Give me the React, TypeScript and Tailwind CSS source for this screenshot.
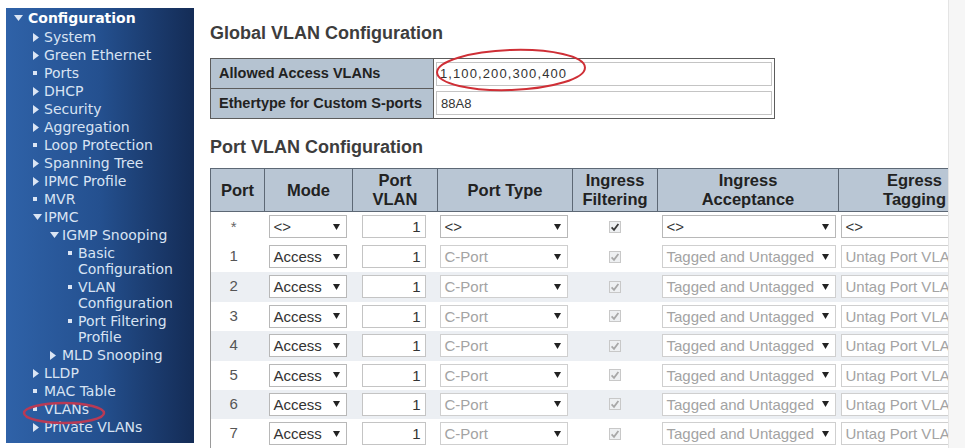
import React from "react";
import clsx from "clsx";

type Marker = "right" | "down" | "square";

const MarkerIcon = ({ kind }: { kind: Marker }) => {
  if (kind === "down")
    return (
      <svg width="9" height="6" viewBox="0 0 9 6">
        <polygon points="0,0 9,0 4.5,6" fill="#dbe5f4" />
      </svg>
    );
  if (kind === "right")
    return (
      <svg width="6" height="9" viewBox="0 0 6 9">
        <polygon points="0,0 6,4.5 0,9" fill="#dbe5f4" />
      </svg>
    );
  return <span className="block h-[4px] w-[4px] bg-[#dbe5f4]" />;
};

const NavItem = ({
  level,
  marker,
  children,
}: {
  level: number;
  marker: Marker;
  children: React.ReactNode;
}) => {
  const pad = ["pl-[27px]", "pl-[44px]", "pl-[62px]"][level - 1];
  const box = ["w-[11px]", "w-[12px]", "w-[10px]"][level - 1];
  return (
    <div className={clsx("mt-[2px] flex leading-[16px]", pad)}>
      <span className={clsx("flex h-[16px] shrink-0 items-center", box)}>
        <MarkerIcon kind={marker} />
      </span>
      <span>{children}</span>
    </div>
  );
};

const Arrow = () => (
  <svg width="7" height="6" viewBox="0 0 7 6" className="shrink-0">
    <polygon points="0,0 7,0 3.5,6" fill="#222" />
  </svg>
);

const Select = ({
  value,
  muted,
  className,
}: {
  value: string;
  muted?: boolean;
  className?: string;
}) => (
  <div
    className={clsx(
      "flex h-[23px] items-center justify-between overflow-hidden whitespace-nowrap border bg-white pl-[4px] pr-[6px] text-[15px] leading-[21px]",
      muted ? "border-[#cfcfcf] text-[#a3a3a3]" : "border-[#b8b8b8] text-[#333]",
      className,
    )}
  >
    <span>{value}</span>
    <Arrow />
  </div>
);

const Check = ({ active }: { active?: boolean }) => (
  <svg width="12" height="12" viewBox="0 0 12 12" className="mx-auto block">
    <rect x="0.5" y="0.5" width="11" height="11" fill="#eef0f2" stroke="#c8c8c8" />
    <path
      d="M2.6 6.4 L5 8.8 L9.4 3"
      fill="none"
      stroke={active ? "#3a3a3a" : "#a8a8a8"}
      strokeWidth="1.8"
    />
  </svg>
);

const ports = ["1", "2", "3", "4", "5", "6", "7"];

export default function App() {
  return (
    <div className="relative flex h-[448px] w-[965px] overflow-hidden bg-white font-['Liberation_Sans',Arial,sans-serif]">
      {/* left menu */}
      <aside className="ml-[6px] mt-[8px] h-[435px] w-[188px] shrink-0 overflow-hidden bg-gradient-to-r from-[#2f62a8] via-[#24508f] to-[#142c56] pt-[1px] font-['DejaVu_Sans',Verdana,sans-serif] text-[14px] text-[#d8e3f3]">
        <div className="flex items-center pl-[8px] text-[14px] font-bold leading-[18px] text-white">
          <span className="flex w-[14px] shrink-0 items-center">
            <MarkerIcon kind="down" />
          </span>
          Configuration
        </div>
        <div className="mt-[1px]">
          <NavItem level={1} marker="right">System</NavItem>
          <NavItem level={1} marker="right">Green Ethernet</NavItem>
          <NavItem level={1} marker="square">Ports</NavItem>
          <NavItem level={1} marker="right">DHCP</NavItem>
          <NavItem level={1} marker="right">Security</NavItem>
          <NavItem level={1} marker="right">Aggregation</NavItem>
          <NavItem level={1} marker="square">Loop Protection</NavItem>
          <NavItem level={1} marker="right">Spanning Tree</NavItem>
          <NavItem level={1} marker="right">IPMC Profile</NavItem>
          <NavItem level={1} marker="square">MVR</NavItem>
          <NavItem level={1} marker="down">IPMC</NavItem>
          <NavItem level={2} marker="down">IGMP Snooping</NavItem>
          <NavItem level={3} marker="square">Basic Configuration</NavItem>
          <NavItem level={3} marker="square">VLAN Configuration</NavItem>
          <NavItem level={3} marker="square">Port Filtering Profile</NavItem>
          <NavItem level={2} marker="right">MLD Snooping</NavItem>
          <NavItem level={1} marker="right">LLDP</NavItem>
          <NavItem level={1} marker="square">MAC Table</NavItem>
          <NavItem level={1} marker="square">VLANs</NavItem>
          <NavItem level={1} marker="right">Private VLANs</NavItem>
        </div>
      </aside>

      {/* content */}
      <main className="ml-[16px] w-[738px] shrink-0 overflow-hidden">
        <h1 className="mt-[23px] text-[18px] font-bold leading-[20px] text-[#3d3d3d]">
          Global VLAN Configuration
        </h1>
        <table className="mt-[15px] w-[565px] border-collapse border border-[#5c5c5c]">
          <tbody>
            <tr className="h-[30px]">
              <th className="w-[223px] border border-[#5c5c5c] bg-[#b5c3d1] pl-[8px] text-left text-[14.5px] font-bold text-[#222]">
                Allowed Access VLANs
              </th>
              <td className="px-[2px]">
                <div className="flex h-[24px] items-center border border-[#c4c4c4] pl-[3px] text-[13px] tracking-[1.1px] text-[#333]">
                  1,100,200,300,400
                </div>
              </td>
            </tr>
            <tr className="h-[30px]">
              <th className="border border-[#5c5c5c] bg-[#b5c3d1] pl-[8px] text-left text-[14.5px] font-bold text-[#222]">
                Ethertype for Custom S-ports
              </th>
              <td className="px-[2px]">
                <div className="flex h-[24px] items-center border border-[#c4c4c4] pl-[4px] text-[13px] text-[#333]">
                  88A8
                </div>
              </td>
            </tr>
          </tbody>
        </table>

        <h2 className="mt-[18px] text-[18px] font-bold leading-[20px] text-[#3d3d3d]">
          Port VLAN Configuration
        </h2>
        <table className="mt-[11px] w-[780px] table-fixed border-collapse border-l border-[#9a9a9a]">
          <colgroup>
            <col className="w-[54px]" />
            <col className="w-[88px]" />
            <col className="w-[85px]" />
            <col className="w-[135px]" />
            <col className="w-[85px]" />
            <col className="w-[181px]" />
            <col className="w-[152px]" />
          </colgroup>
          <thead>
            <tr className="h-[43px] text-[16.5px] font-bold leading-[19px] text-[#222]">
              {[
                ["Port"],
                ["Mode"],
                ["Port", "VLAN"],
                ["Port Type"],
                ["Ingress", "Filtering"],
                ["Ingress", "Acceptance"],
                ["Egress", "Tagging"],
              ].map((h) => (
                <th
                  key={h.join(" ")}
                  className="whitespace-nowrap border border-[#5d6875] bg-[#b9c6d4] px-[2px] text-center"
                >
                  {h[0]}
                  {h[1] && (
                    <>
                      <br />
                      {h[1]}
                    </>
                  )}
                </th>
              ))}
            </tr>
          </thead>
          <tbody>
            <tr className="h-[30px]">
              <td className="pr-[8px] text-center text-[15px] text-[#666]">*</td>
              <td className="pl-[4px]">
                <Select value="<>" className="w-[78px]" />
              </td>
              <td className="pl-[9px]">
                <div className="h-[23px] w-[64px] border border-[#c4c4c4] pr-[4px] text-right text-[15px] leading-[21px] text-[#333]">
                  1
                </div>
              </td>
              <td className="pl-[2px]">
                <Select value="<>" className="w-[128px]" />
              </td>
              <td>
                <Check active />
              </td>
              <td className="pl-[4px]">
                <Select value="<>" className="w-[174px]" />
              </td>
              <td className="pl-[2px]">
                <Select value="<>" className="w-[146px]" />
              </td>
            </tr>
            {ports.map((p, i) => (
              <tr
                key={p}
                className={clsx(
                  i % 3 === 2 || i === 4 ? "h-[29px]" : "h-[30px]",
                  i % 2 === 1 ? "bg-[#eceff3]" : "bg-white",
                )}
              >
                <td className="pr-[8px] text-center text-[15px] text-[#555]">{p}</td>
                <td className="pl-[4px]">
                  <Select value="Access" className="w-[78px]" />
                </td>
                <td className="pl-[9px]">
                  <div className="h-[23px] w-[64px] border border-[#c4c4c4] bg-white pr-[4px] text-right text-[15px] leading-[21px] text-[#333]">
                    1
                  </div>
                </td>
                <td className="pl-[2px]">
                  <Select value="C-Port" muted className="w-[128px]" />
                </td>
                <td>
                  <Check />
                </td>
                <td className="pl-[4px]">
                  <Select value="Tagged and Untagged" muted className="w-[174px]" />
                </td>
                <td className="pl-[2px]">
                  <Select value="Untag Port VLAN" muted className="w-[146px]" />
                </td>
              </tr>
            ))}
          </tbody>
        </table>
      </main>

      <div className="flex-1 border-l border-[#e4e4e4] bg-[#f6f6f6]" />

      {/* red annotation marks */}
      <svg
        className="pointer-events-none absolute left-0 top-0"
        width="965"
        height="448"
        viewBox="0 0 965 448"
      >
        <ellipse
          cx="511"
          cy="70"
          rx="74"
          ry="20"
          transform="rotate(-2 511 70)"
          fill="none"
          stroke="#cf2f36"
          strokeWidth="2"
        />
        <ellipse cx="64" cy="413" rx="40" ry="10" fill="none" stroke="#b83a55" strokeWidth="2.5" />
      </svg>
    </div>
  );
}
